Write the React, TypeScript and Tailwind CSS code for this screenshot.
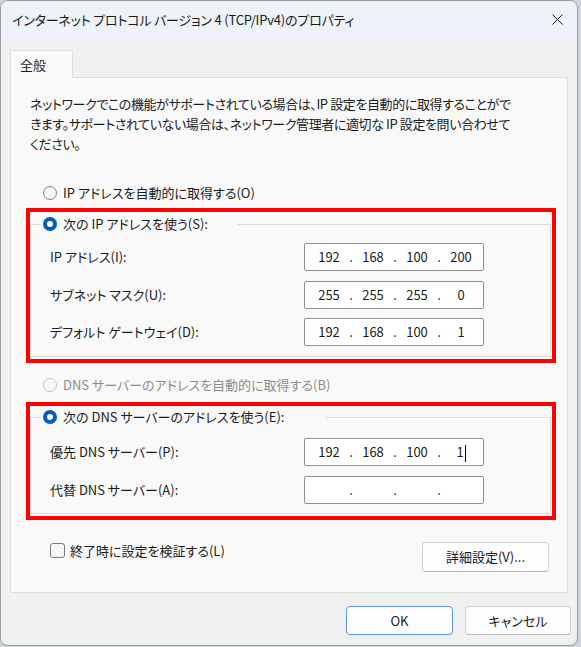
import { Fragment } from "react";

const jp = "font-['Noto_Sans_CJK_JP','Noto_Sans',sans-serif] [font-feature-settings:'palt']";

function Radio({ checked, disabled }: { checked?: boolean; disabled?: boolean }) {
  if (checked) {
    return (
      <span className="w-[14px] h-[14px] rounded-full bg-[#005fb8] flex items-center justify-center shrink-0">
        <span className="w-[6px] h-[6px] rounded-full bg-white" />
      </span>
    );
  }
  return (
    <span
      className={
        disabled
          ? "w-[14px] h-[14px] rounded-full border border-[#c4c4c4] bg-[#f7f7f7] shrink-0"
          : "w-[14px] h-[14px] rounded-full border border-[#858585] bg-[#f5f5f5] shrink-0"
      }
    />
  );
}

function IpField({ parts, caret }: { parts: string[]; caret?: boolean }) {
  return (
    <div className="w-[180px] h-[28px] bg-white border border-[#8f8f8f] rounded-[2px] flex items-center pl-[6px] text-[13px] text-[#1b1b1b]">
      {parts.map((p, i) => (
        <Fragment key={i}>
          {i > 0 && <span className="w-[8px] text-center">.</span>}
          <span className="w-[36px] text-center">
            {p}
            {caret && i === 3 && <span className="inline-block w-px h-[17px] bg-black align-middle ml-[1px]" />}
          </span>
        </Fragment>
      ))}
    </div>
  );
}

function FieldRow({ label, parts, caret }: { label: string; parts: string[]; caret?: boolean }) {
  return (
    <div className="flex items-center pl-[19px]">
      <span className="w-[254px] text-[13px]">{label}</span>
      <IpField parts={parts} caret={caret} />
    </div>
  );
}

export default function App() {
  return (
    <div className={`w-[581px] h-[647px] bg-[#cfd3da] ${jp}`}>
      <div className="w-[578px] h-[646px] bg-[#f0f0f0] border border-[#9a9a9a] rounded-[8px] overflow-hidden flex flex-col text-[#1b1b1b]">
        {/* Title bar */}
        <div className="h-[37px] bg-[#eef2f9] flex items-center justify-between pl-[11px] pr-[14px] shrink-0">
          <span className="text-[13px] tracking-[-0.2px]">インターネット プロトコル バージョン 4 (TCP/IPv4)のプロパティ</span>
          <svg width="11" height="11" viewBox="0 0 11 11" className="text-[#1b1b1b]">
            <path d="M0.5 0.5L10.5 10.5M10.5 0.5L0.5 10.5" stroke="currentColor" strokeWidth="1" />
          </svg>
        </div>

        <div className="pt-[12px] px-[9px]">
          {/* Tab */}
          <div className="relative z-10 w-[63px] h-[28px] -mb-px bg-[#f9f9f9] border border-b-0 border-[#dedede] flex items-center pl-[9px] text-[13px]">
            全般
          </div>

          {/* Panel */}
          <div className="h-[516px] w-[558px] bg-[#f9f9f9] border border-[#dedede] flex flex-col">
            <p className="pt-[16px] pl-[19px] text-[13px] leading-[20px] tracking-[-0.4px] whitespace-nowrap">
              ネットワークでこの機能がサポートされている場合は、IP 設定を自動的に取得することがで
              <br />
              きます。サポートされていない場合は、ネットワーク管理者に適切な IP 設定を問い合わせて
              <br />
              ください。
            </p>

            <div className="mt-[29px] pl-[32px] h-[20px] flex items-center gap-[6px] text-[13px]">
              <Radio />
              <span>IP アドレスを自動的に取得する(O)</span>
            </div>

            {/* Static IP group */}
            <div className="relative mt-[11px] ml-[19px] mr-[16px]">
              <fieldset className="border border-[#dcdcdc] pt-[9px] pb-[10px]">
                <legend className="ml-[10px] w-[197px] h-[20px] pl-[2px]">
                  <span className="flex items-center gap-[6px] h-[20px] text-[13px]">
                    <Radio checked />
                    <span>次の IP アドレスを使う(S):</span>
                  </span>
                </legend>
                <div className="flex flex-col gap-[9.5px]">
                  <FieldRow label="IP アドレス(I):" parts={["192", "168", "100", "200"]} />
                  <FieldRow label="サブネット マスク(U):" parts={["255", "255", "255", "0"]} />
                  <FieldRow label="デフォルト ゲートウェイ(D):" parts={["192", "168", "100", "1"]} />
                </div>
              </fieldset>
              <div className="absolute -left-[4px] -right-[5px] -top-[6px] -bottom-[6px] border-4 border-[#ff0000] pointer-events-none" />
            </div>

            <div className="mt-[18px] pl-[32px] h-[20px] flex items-center gap-[6px] text-[13px] text-[#8d8d8d]">
              <Radio disabled />
              <span>DNS サーバーのアドレスを自動的に取得する(B)</span>
            </div>

            {/* DNS group */}
            <div className="relative mt-[12px] ml-[19px] mr-[16px]">
              <fieldset className="border border-[#dcdcdc] pt-[11px] pb-[9px]">
                <legend className="ml-[10px] w-[285px] h-[20px] pl-[2px]">
                  <span className="flex items-center gap-[6px] h-[20px] text-[13px]">
                    <Radio checked />
                    <span>次の DNS サーバーのアドレスを使う(E):</span>
                  </span>
                </legend>
                <div className="flex flex-col gap-[9.5px]">
                  <FieldRow label="優先 DNS サーバー(P):" parts={["192", "168", "100", "1"]} caret />
                  <FieldRow label="代替 DNS サーバー(A):" parts={["", "", "", ""]} />
                </div>
              </fieldset>
              <div className="absolute -left-[4px] -right-[5px] -top-[5px] -bottom-[6px] border-4 border-[#ff0000] pointer-events-none" />
            </div>

            <div className="mt-[27px] flex items-start justify-between pl-[39px] pr-[18px]">
              <div className="h-[20px] flex items-center gap-[5px] text-[13px]">
                <span className="w-[15px] h-[15px] rounded-[3px] border border-[#7a7a7a] bg-[#f7f7f7]" />
                <span>終了時に設定を検証する(L)</span>
              </div>
              <button className="mt-[1px] w-[127px] h-[30px] rounded-[4px] bg-[#fdfdfd] border border-[#d0d0d0] border-b-[#b8b8b8] text-[13px]">
                詳細設定(V)...
              </button>
            </div>
          </div>
        </div>

        {/* Bottom buttons */}
        <div className="mt-[13px] flex justify-end gap-[12px] pr-[6px]">
          <button className="w-[107px] h-[29px] rounded-[4px] bg-[#fdfdfd] border border-[#5b97d5] text-[13px]">
            OK
          </button>
          <button className="w-[106px] h-[29px] rounded-[4px] bg-[#fdfdfd] border border-[#d0d0d0] border-b-[#b8b8b8] text-[13px]">
            キャンセル
          </button>
        </div>
      </div>
    </div>
  );
}
